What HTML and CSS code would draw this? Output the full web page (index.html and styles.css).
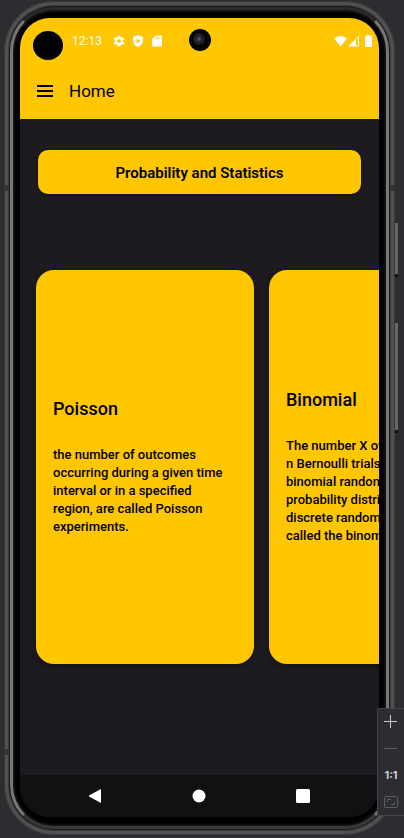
FILE: index.html
```html
<!DOCTYPE html>
<html lang="en">
<head>
<meta charset="utf-8">
<meta name="viewport" content="width=device-width, initial-scale=1">
<title>Home</title>
<link rel="stylesheet" href="styles.css">
</head>
<body>
<div class="phone">
  <span class="side-key power"></span>
  <span class="side-key volume"></span>
  <span class="seam seam-top"></span>
  <span class="seam seam-bottom"></span>
  <div class="rim">
    <div class="screen">
      <span class="cutout"></span>
      <span class="camera"></span>
      <header class="top">
        <div class="status">
          <span class="clock">12:13</span>
          <svg class="status-icon" viewBox="1 1 22 22" aria-hidden="true"><path fill-rule="evenodd" d="M19.4 13c0-.3.1-.6.1-1s0-.7-.1-1l2.100-1.600c.2-.2.300-.4.100-.6l-2-3.500c-.1-.2-.4-.3-.6-.2l-2.500 1c-.5-.4-1.100-.7-1.700-1l-.4-2.600c0-.3-.2-.5-.5-.5h-4c-.3 0-.5.2-.5.4L9.200 5.100c-.6.2-1.200.6-1.700 1l-2.500-1c-.2-.1-.5 0-.6.2l-2 3.500c-.1.2-.1.500.1.600L4.600 11c0 .3-.1.600-.1 1s0 .7.100 1l-2.100 1.600c-.2.200-.2.400-.1.600l2 3.500c.1.200.4.300.6.200l2.500-1c.5.4 1.100.7 1.700 1l.4 2.600c0 .2.200.4.500.4h4c.3 0 .5-.2.500-.4l.4-2.600c.6-.3 1.200-.6 1.700-1l2.500 1c.2.100.5 0 .6-.2l2-3.500c.1-.2.100-.4-.1-.6zM12 15.500a3.500 3.500 0 1 1 0-7 3.500 3.500 0 0 1 0 7z"/></svg>
          <svg class="status-icon" viewBox="1 1 22 22" aria-hidden="true"><path fill-rule="evenodd" d="M12 1 3 4.500V11c0 5.500 3.800 10.500 9 12 5.200-1.500 9-6.500 9-12V4.500zM9.500 7.500l7 4.500-7 4.500z"/></svg>
          <svg class="status-icon" viewBox="1 1 22 22" aria-hidden="true"><path fill-rule="evenodd" d="M21 2H10L3 8v14h18zM9 5h2v4H9zm4 0h2v4h-2zm4 0h1v4h-1z"/></svg>
          <svg class="signals" viewBox="0 0 39 12" aria-hidden="true"><path d="M0 3.500Q6.500-1.500 13 3.500L6.500 11.500z"/><path fill-rule="evenodd" d="M25 .5v11H14zM24 3.500h-2v7h2z"/><path d="M33 0h3v1h2v11h-7V1h2z"/></svg>
        </div>
        <div class="app-bar">
          <button class="menu" type="button" aria-label="Open menu"><svg viewBox="0 0 16 12" aria-hidden="true"><path d="M0 0h16v2H0zM0 5h16v2H0zM0 10h16v2H0z"/></svg></button>
          <h1>Home</h1>
        </div>
      </header>
      <main>
        <button class="topic" type="button">Probability and Statistics</button>
        <div class="cards">
          <article class="card">
            <h2>Poisson</h2>
            <p>the number of outcomes occurring during a given time interval or in a specified region, are called Poisson experiments.</p>
          </article>
          <article class="card">
            <h2>Binomial</h2>
            <p>The number X of successes in n Bernoulli trials is called a binomial random variable. The probability distribution of this discrete random variable is called the binomial law.</p>
          </article>
        </div>
      </main>
      <nav class="system">
        <button type="button" aria-label="Back"><svg viewBox="0 0 14 14" aria-hidden="true"><path d="M13 0v14L1 7.500v-1z"/></svg></button>
        <button type="button" aria-label="Home screen"><svg viewBox="0 0 14 14" aria-hidden="true"><circle cx="7" cy="7" r="6.500"/></svg></button>
        <button type="button" aria-label="Recent apps"><svg viewBox="0 0 14 14" aria-hidden="true"><rect width="14" height="14" rx="1.500"/></svg></button>
      </nav>
    </div>
  </div>
</div>
<aside class="zoom">
  <button type="button" aria-label="Zoom in"><svg viewBox="0 0 14 14" aria-hidden="true"><path d="M6.500 0v13M0 6.500h13"/></svg></button>
  <button class="dim" type="button" aria-label="Zoom out"><svg viewBox="0 0 14 14" aria-hidden="true"><path d="M0 6.500h13"/></svg></button>
  <button type="button">1:1</button>
  <button class="dim" type="button" aria-label="Fit to window"><svg viewBox="0 0 14 14" aria-hidden="true"><rect x=".5" y="1.500" width="13" height="11" rx="1"/><path d="M3.500 7V4.500H7M7 9.500h3.500V7"/></svg></button>
</aside>
</body>
</html>
```
FILE: styles.css
```css
* {
  box-sizing: border-box;
}

body {
  margin: 0;
  padding: 1px 9px 3px 4px;
  min-height: 100vh;
  display: flex;
  background: #2b2d31;
  font-family: Roboto, sans-serif;
  color: #000;
}

button {
  padding: 0;
  border: 0;
  background: none;
  color: inherit;
  font-family: inherit;
}

svg {
  display: block;
  fill: currentColor;
}

h1,
h2,
p {
  margin: 0;
  font-weight: 400;
}

.phone {
  position: relative;
  flex: 1;
  min-width: 0;
  display: flex;
  padding: 6px;
  border-radius: 50px;
  background: #1c1c1c;
  box-shadow: inset 0 0 0 1px #3a3a3a, inset 0 0 0 4px #505050, inset 0 0 0 5px #3c3c3c;
}

.rim {
  flex: 1;
  min-width: 0;
  display: flex;
  padding: 8px 7px 9px;
  border: 3px solid;
  border-color: #2a2a2a #777 #383838;
  border-radius: 44px;
  background: #000;
  box-shadow: inset 0 0 3px 1px #222;
}

.screen {
  position: relative;
  flex: 1;
  min-width: 0;
  display: flex;
  flex-direction: column;
  overflow: hidden;
  border-radius: 30px;
  background: #1d1b20;
}

.side-key {
  position: absolute;
  left: 100%;
  width: 3px;
  border-bottom: 3px solid #111;
  background: #666;
}

.power {
  top: 222px;
  height: 54px;
}

.volume {
  top: 322px;
  height: 110px;
}

.seam {
  position: absolute;
  left: 0;
  right: 0;
  height: 6px;
  border: solid #333;
  border-width: 0 5px;
}

.seam-top {
  top: 184px;
}

.seam-bottom {
  bottom: 80px;
}

.cutout {
  position: absolute;
  top: 13px;
  left: 13px;
  width: 30px;
  height: 29px;
  border-radius: 50%;
  background: #000;
}

.camera {
  position: absolute;
  top: 11px;
  left: 50%;
  width: 22px;
  height: 22px;
  margin-left: -11px;
  border-radius: 50%;
  background: radial-gradient(circle at 10px 10px, #5a4668 0 1px, #243447 2px, #16181c 4px, #2c2c30 5px, #050505 6px);
}

.top {
  background: #ffc602;
}

.status {
  display: flex;
  align-items: center;
  gap: 7px;
  height: 45px;
  padding: 0 6px 0 52px;
  color: #fff;
}

.clock {
  margin-right: 4px;
  font-size: 12px;
}

.status-icon {
  width: 12px;
  height: 12px;
}

.signals {
  width: 39px;
  height: 12px;
  margin-left: auto;
}

.app-bar {
  display: flex;
  align-items: center;
  gap: 16px;
  height: 56px;
  padding: 0 17px;
}

.menu svg {
  width: 16px;
  height: 12px;
}

.app-bar h1 {
  font-size: 17px;
}

main {
  flex: 1;
  display: flex;
  flex-direction: column;
  padding-top: 31px;
}

.topic {
  height: 44px;
  margin: 0 18px;
  padding-top: 2px;
  border-radius: 10px;
  background: #ffc602;
  box-shadow: 0 1px 3px #111;
  font-size: 15px;
  font-weight: 600;
}

.cards {
  flex: 1;
  display: flex;
  gap: 15px;
  margin: 76px 0 111px;
  padding-left: 16px;
}

.card {
  flex: 0 0 218px;
  display: flex;
  flex-direction: column;
  justify-content: center;
  gap: 25px;
  padding: 0 22px 2px 17px;
  border-radius: 18px;
  background: #ffc602;
  box-shadow: 0 2px 4px #111;
}

.card h2 {
  font-size: 18px;
  line-height: 24px;
  font-weight: 500;
}

.card p {
  font-size: 13px;
  line-height: 18px;
  font-weight: 500;
}

.system {
  display: flex;
  justify-content: space-between;
  align-items: center;
  height: 42px;
  padding: 0 69px 0 68px;
  background: #111113;
  color: #fff;
}

.system svg {
  width: 14px;
  height: 14px;
}

.zoom {
  position: fixed;
  right: 0;
  bottom: 22px;
  width: 27px;
  height: 108px;
  display: flex;
  flex-direction: column;
  justify-content: space-around;
  align-items: center;
  border: 1px solid #43454a;
  border-right: 0;
  border-radius: 3px 0 0 3px;
  background: #2b2d30;
  color: #ced0d6;
}

.zoom button {
  font-family: Inter, sans-serif;
  font-size: 11px;
  font-weight: 700;
}

.zoom svg {
  width: 14px;
  height: 14px;
  fill: none;
  stroke: currentColor;
}

.zoom .dim {
  color: #5a5d63;
}
```
